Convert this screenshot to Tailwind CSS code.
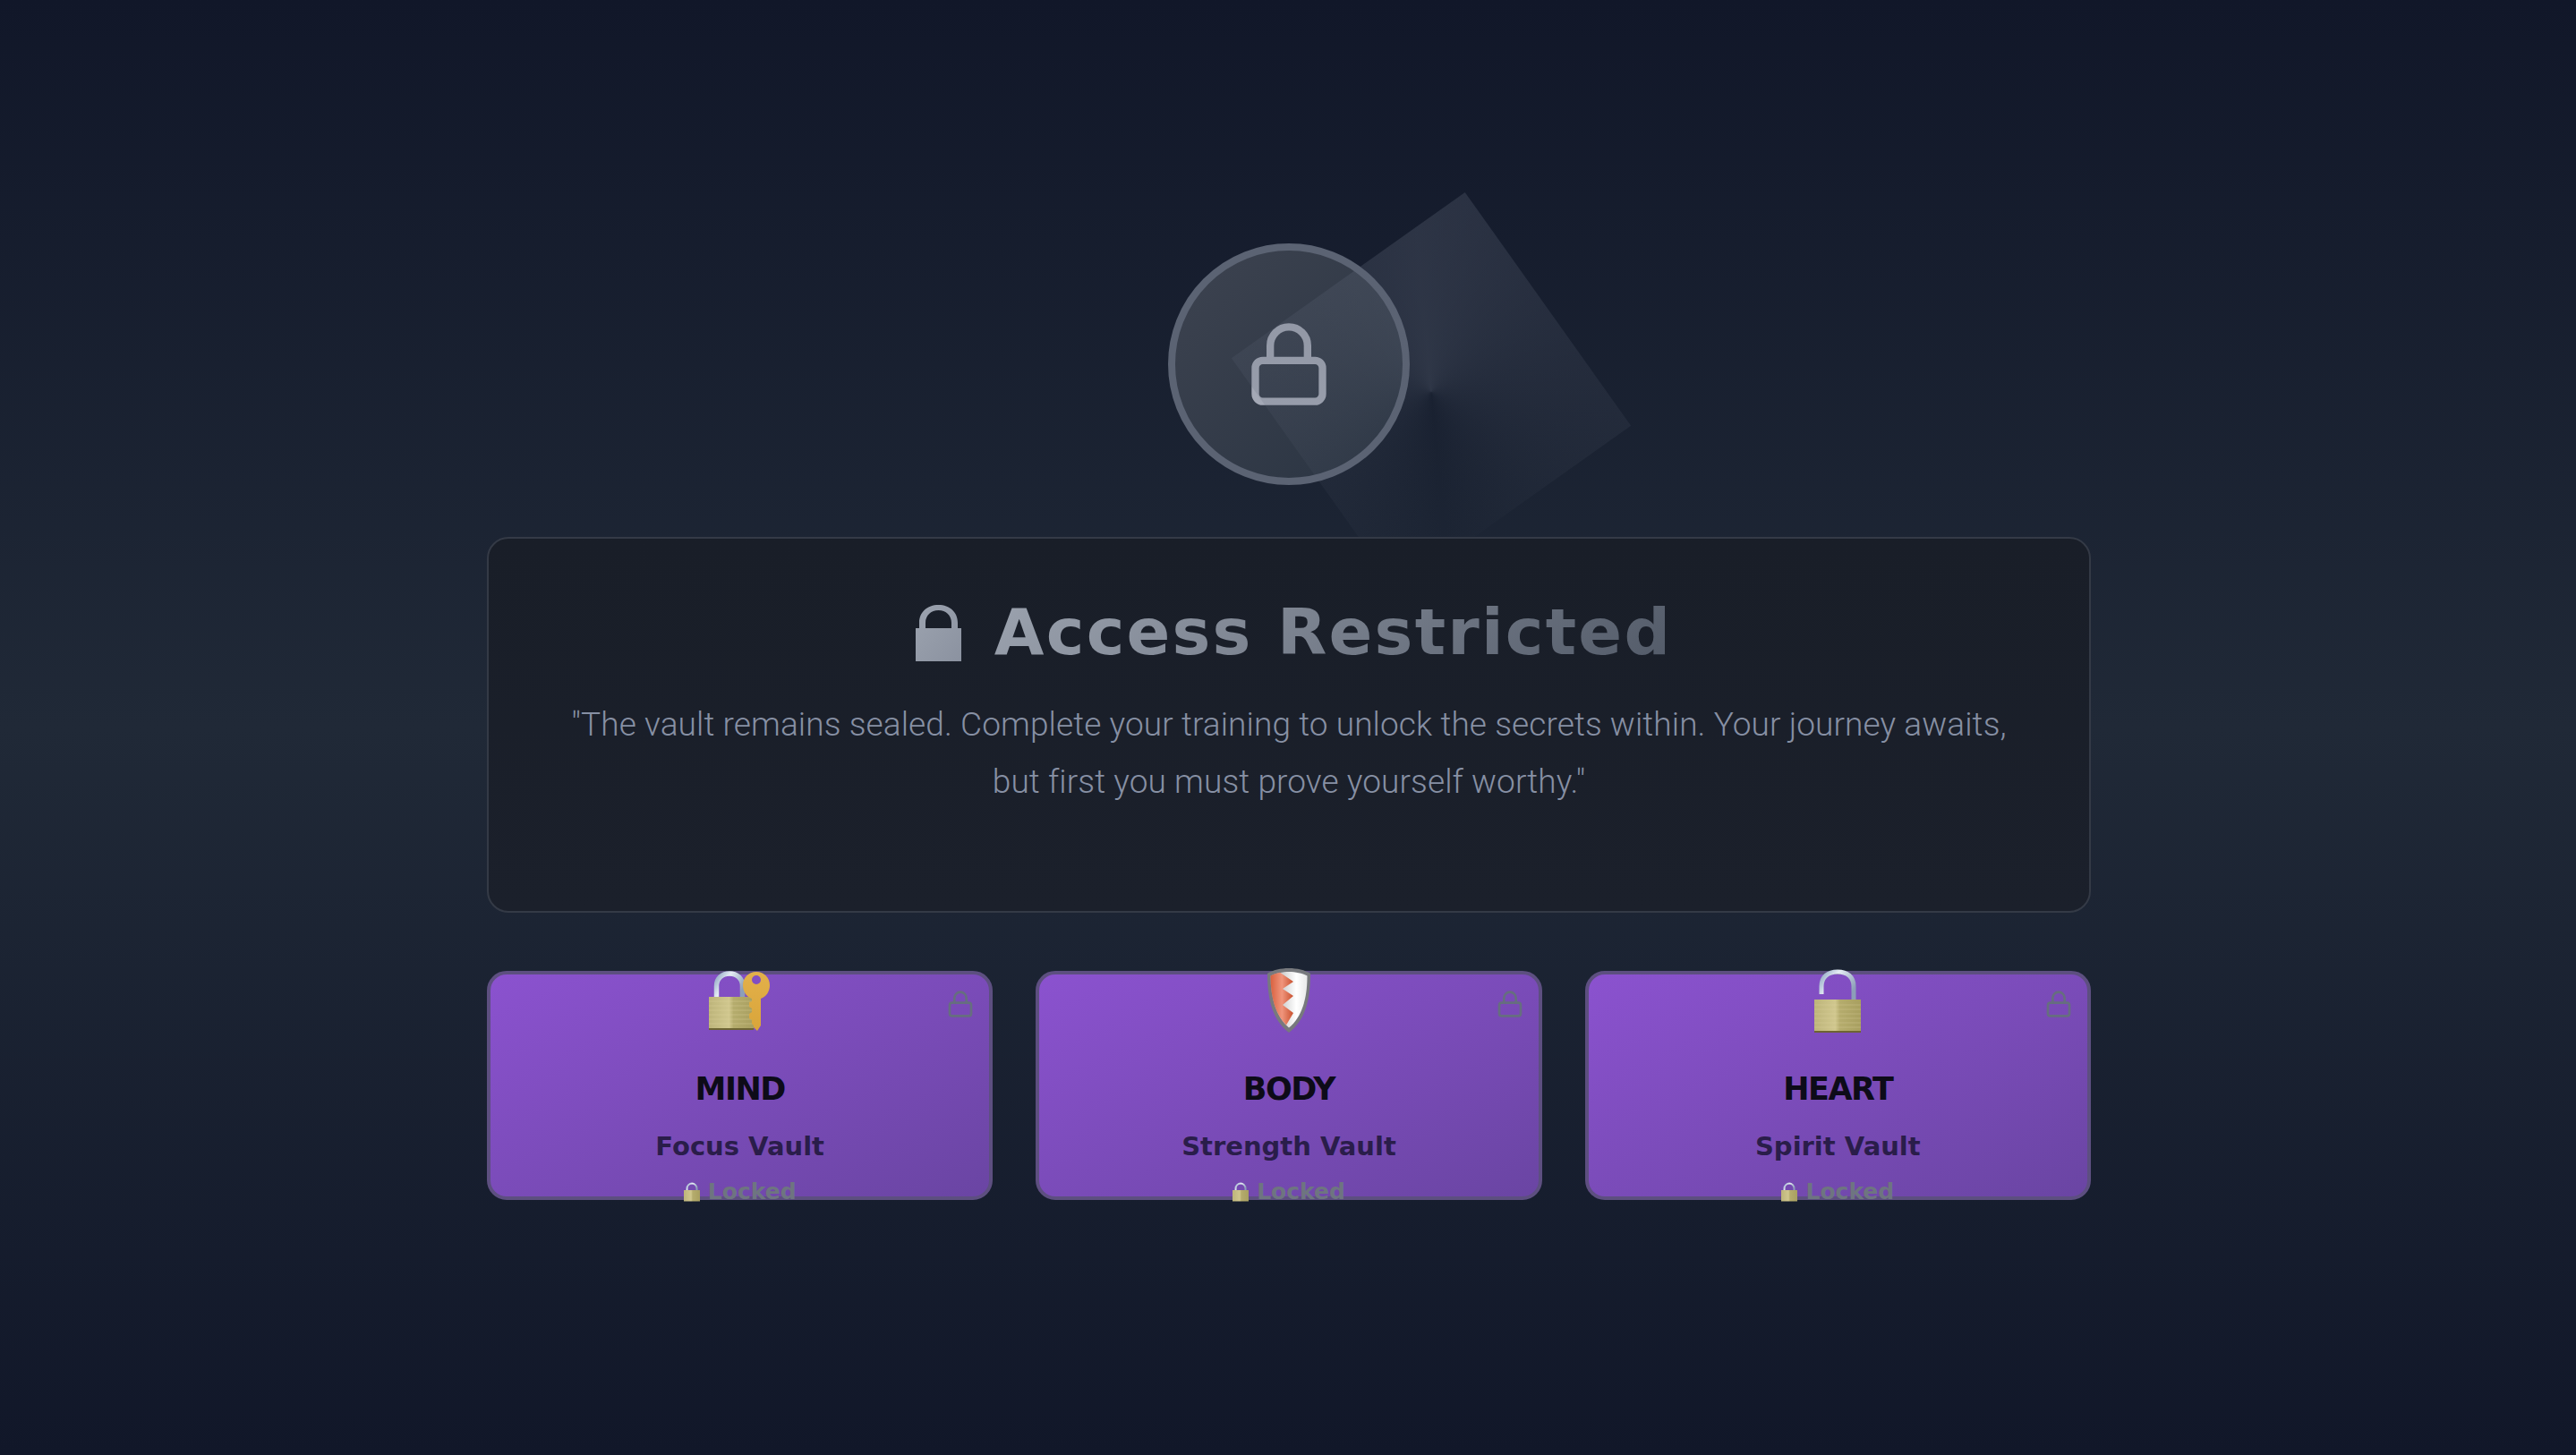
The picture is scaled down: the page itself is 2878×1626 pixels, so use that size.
<!DOCTYPE html>
<html lang="en">

<head>
    <meta charset="UTF-8">
    <title>Access Restricted</title>
    <script src="https://cdn.jsdelivr.net/npm/@tailwindcss/browser@4"></script>
</head>

<body class="min-h-screen bg-[linear-gradient(180deg,#111729_0%,#202937_50%,#111729_100%)] font-['DejaVu_Sans',sans-serif]">
    <!-- shared gradients for the emoji drawings -->
    <svg width="0" height="0" class="absolute">
        <defs>
            <linearGradient id="brass" x1="0" x2="1" y1="0" y2="0">
                <stop offset="0" stop-color="#bdb47a" />
                <stop offset="0.45" stop-color="#d0c78e" />
                <stop offset="0.55" stop-color="#b5ac6d" />
                <stop offset="1" stop-color="#a89f60" />
            </linearGradient>
            <linearGradient id="steel" x1="0" x2="1" y1="0" y2="0.6">
                <stop offset="0" stop-color="#8fa6c4" />
                <stop offset="0.4" stop-color="#e6edf5" />
                <stop offset="1" stop-color="#8c9fb8" />
            </linearGradient>
            <linearGradient id="keygold" x1="0" x2="0" y1="0" y2="1">
                <stop offset="0" stop-color="#e3b04a" />
                <stop offset="1" stop-color="#d9a53a" />
            </linearGradient>
            <linearGradient id="shieldred" x1="0" x2="1" y1="0" y2="0">
                <stop offset="0" stop-color="#d9613f" />
                <stop offset="0.5" stop-color="#f0957c" />
                <stop offset="1" stop-color="#c9512f" />
            </linearGradient>
            <linearGradient id="shieldwhite" x1="0" x2="1" y1="0" y2="0">
                <stop offset="0" stop-color="#a8a8a8" />
                <stop offset="0.7" stop-color="#ffffff" />
                <stop offset="1" stop-color="#e9e9e9" />
            </linearGradient>
            <linearGradient id="titlelock" x1="0" x2="1" y1="0" y2="1">
                <stop offset="0" stop-color="#9ca3af" />
                <stop offset="1" stop-color="#8b92a0" />
            </linearGradient>
        </defs>
    </svg>

    <main class="relative flex flex-col items-center pl-[2px] pt-[272px] overflow-hidden">
        <div
            class="flex items-center justify-center w-[270px] h-[270px] rounded-full border-[8px] border-[#5b6373] bg-[linear-gradient(135deg,#3d4350,#2a3442)]">
            <svg width="100" height="100" viewBox="0 0 24 24" fill="none" stroke="#a4a9b6" stroke-width="2"
                stroke-linecap="round" stroke-linejoin="round">
                <rect x="3" y="11" width="18" height="11" rx="2" />
                <path d="M7 11V7a5 5 0 0 1 10 0v4" />
            </svg>
        </div>

        <div
            class="absolute left-[1439px] top-[278px] w-[320px] h-[320px] rotate-[54.6deg] bg-[conic-gradient(from_120deg,rgba(90,98,115,0)_0%,rgba(90,98,115,0.34)_50%,rgba(90,98,115,0)_100%)]">
        </div>

        <section
            class="relative w-[1792px] h-[420px] mt-[58px] rounded-3xl border-2 border-[#343a46] bg-[linear-gradient(180deg,#191e28,#1b202b)] flex flex-col items-center pt-[61px]">
            <h1 class="flex items-center gap-[37px] h-[86px] pl-[11px]">
                <svg class="shrink-0 mt-[2px]" width="51" height="63" viewBox="0 0 51 63">
                    <path fill="url(#titlelock)" fill-rule="evenodd"
                        d="M0 26h4V20C4 8 13 0 25.500 0S47 8 47 20v6h4v37H0ZM11 26h29V20c0-8-6-14-14.500-14S11 12 11 20Z" />
                </svg>
                <span
                    class="text-[72px] leading-[86px] font-bold tracking-[2.2px] text-transparent bg-clip-text bg-[linear-gradient(135deg,#9ca3af,#525a68)]">Access
                    Restricted</span>
            </h1>
            <p
                class="mt-[29px] w-[1640px] text-center text-[37px] leading-[64px] font-light tracking-[0.1px] text-[#8790a4] font-['Roboto',sans-serif]">
                "The vault remains sealed. Complete your training to unlock the secrets within. Your journey awaits,<br>but first you must prove yourself worthy."
            </p>
        </section>

        <div class="grid grid-cols-3 gap-12 w-[1792px] mt-[65px]">
            <article
                class="relative flex flex-col items-center h-[256px] rounded-[22px] border-4 border-[#5d4f80] bg-[linear-gradient(to_bottom_right,#8b52cf,#6a45a3)]">
                <svg class="absolute top-[17px] right-[16px]" width="32" height="32" viewBox="0 0 24 24" fill="none"
                    stroke="#666e7f" stroke-width="2" stroke-linecap="round" stroke-linejoin="round">
                    <rect x="3" y="11" width="18" height="11" rx="2" />
                    <path d="M7 11V7a5 5 0 0 1 10 0v4" />
                </svg>
                <svg class="shrink-0 -mt-[4px]" width="69" height="70" viewBox="0 0 69 70">
                    <path d="M8.500 32V17C8.500 8 15 3 23 3s14.500 5 14.500 14v15" fill="none" stroke="url(#steel)"
                        stroke-width="5.500" />
                    <rect y="29" width="50" height="37" fill="url(#brass)" />
                    <path d="M0 34h50M0 39h50M0 44h50M0 49h50M0 54h50M0 59h50" stroke="#e0d8a4" stroke-opacity="0.35" />
                    <rect y="64" width="50" height="2" fill="#6d6433" />
                    <path fill="url(#keygold)" fill-rule="evenodd"
                        d="M53 1c9 0 15 7 15 15 0 7-4 13-10 15v30l-4 6-4-4V61l-2-2v-4l-3-2v-5l3-2v-4l-3-2v-5l3-1V31c-6-2-10-8-10-15C38 8 44 1 53 1ZM53 5a5 5 0 1 0 0 10 5 5 0 0 0 0-10Z" />
                </svg>
                <h2 class="mt-[40px] text-[35px] leading-[44px] font-bold tracking-[-1.5px] text-[#0d0b18]">MIND</h2>
                <p class="mt-[25px] text-[29px] leading-[34px] font-bold text-[#2a1d4a]">Focus Vault</p>
                <p class="mt-[19px] flex items-center gap-[9px] text-[25px] leading-[30px] font-bold text-[#6e7580]">
                    <svg class="shrink-0" width="18" height="22" viewBox="0 0 18 22">
                        <path d="M3.500 10V7a5.500 5.500 0 0 1 11 0v3" fill="none" stroke="url(#steel)" stroke-width="2" />
                        <rect y="9" width="18" height="12.500" fill="url(#brass)" />
                    </svg>
                    Locked
                </p>
            </article>

            <article
                class="relative flex flex-col items-center h-[256px] rounded-[22px] border-4 border-[#5d4f80] bg-[linear-gradient(to_bottom_right,#8b52cf,#6a45a3)]">
                <svg class="absolute top-[17px] right-[16px]" width="32" height="32" viewBox="0 0 24 24" fill="none"
                    stroke="#666e7f" stroke-width="2" stroke-linecap="round" stroke-linejoin="round">
                    <rect x="3" y="11" width="18" height="11" rx="2" />
                    <path d="M7 11V7a5 5 0 0 1 10 0v4" />
                </svg>
                <svg class="shrink-0 -mt-[7px]" width="48" height="73" viewBox="0 0 48 73">
                    <path fill="#77797d"
                        d="M24 0C33 0 42 2 48 6c0 30-6 52-24 66C6 58 0 36 0 6 6 2 15 0 24 0Z" />
                    <path fill="url(#shieldwhite)"
                        d="M24 4C31 4 39 5.500 44.500 8.500c0 26-6 46-20.500 58C10 54.500 3.500 34.500 3.500 8.500 9 5.500 17 4 24 4Z" />
                    <path fill="url(#shieldred)"
                        d="M14 4.700 29 15 17 23l12 8-12 10 12 9-8 13.500C9 52 3.500 32 3.500 8.500 7 6.500 10 5.500 14 4.700Z" />
                </svg>
                <h2 class="mt-[40px] text-[35px] leading-[44px] font-bold tracking-[-1.5px] text-[#0d0b18]">BODY</h2>
                <p class="mt-[25px] text-[29px] leading-[34px] font-bold text-[#2a1d4a]">Strength Vault</p>
                <p class="mt-[19px] flex items-center gap-[9px] text-[25px] leading-[30px] font-bold text-[#6e7580]">
                    <svg class="shrink-0" width="18" height="22" viewBox="0 0 18 22">
                        <path d="M3.500 10V7a5.500 5.500 0 0 1 11 0v3" fill="none" stroke="url(#steel)" stroke-width="2" />
                        <rect y="9" width="18" height="12.500" fill="url(#brass)" />
                    </svg>
                    Locked
                </p>
            </article>

            <article
                class="relative flex flex-col items-center h-[256px] rounded-[22px] border-4 border-[#5d4f80] bg-[linear-gradient(to_bottom_right,#8b52cf,#6a45a3)]">
                <svg class="absolute top-[17px] right-[16px]" width="32" height="32" viewBox="0 0 24 24" fill="none"
                    stroke="#666e7f" stroke-width="2" stroke-linecap="round" stroke-linejoin="round">
                    <rect x="3" y="11" width="18" height="11" rx="2" />
                    <path d="M7 11V7a5 5 0 0 1 10 0v4" />
                </svg>
                <svg class="shrink-0 -mt-[6px]" width="52" height="72" viewBox="0 0 52 72">
                    <path d="M8 28V19C8 9 15 3 26 3s18 6 18 16v17" fill="none" stroke="url(#steel)" stroke-width="5" />
                    <rect y="34" width="52" height="37" fill="url(#brass)" />
                    <path d="M0 40h52M0 45h52M0 50h52M0 55h52M0 60h52M0 65h52" stroke="#e0d8a4" stroke-opacity="0.3" />
                    <rect y="69" width="52" height="2" fill="#6d6433" />
                </svg>
                <h2 class="mt-[40px] text-[35px] leading-[44px] font-bold tracking-[-1.5px] text-[#0d0b18]">HEART</h2>
                <p class="mt-[25px] text-[29px] leading-[34px] font-bold text-[#2a1d4a]">Spirit Vault</p>
                <p class="mt-[19px] flex items-center gap-[9px] text-[25px] leading-[30px] font-bold text-[#6e7580]">
                    <svg class="shrink-0" width="18" height="22" viewBox="0 0 18 22">
                        <path d="M3.500 10V7a5.500 5.500 0 0 1 11 0v3" fill="none" stroke="url(#steel)" stroke-width="2" />
                        <rect y="9" width="18" height="12.500" fill="url(#brass)" />
                    </svg>
                    Locked
                </p>
            </article>
        </div>
        <div class="h-[285px]"></div>
    </main>
</body>

</html>
